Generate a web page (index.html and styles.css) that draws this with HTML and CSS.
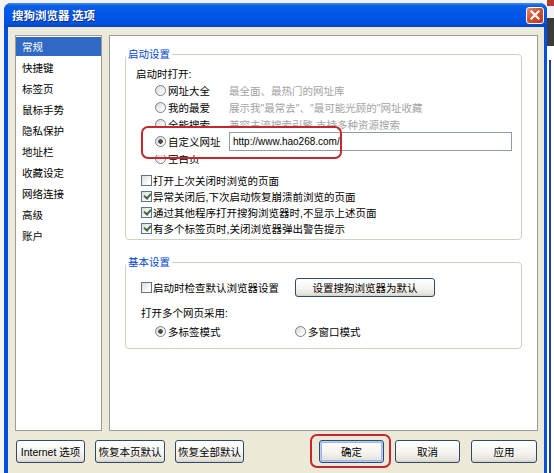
FILE: index.html
```html
<!DOCTYPE html>
<html lang="zh-CN">
<head>
<meta charset="UTF-8">
<meta name="viewport" content="width=device-width, initial-scale=1.0">
<title>搜狗浏览器 选项</title>
<link rel="stylesheet" href="styles.css">
</head>
<body>

<div class="screen">
    <div class="desk-left"></div>

    <div class="window">
        <div class="titlebar">
            <span class="title">搜狗浏览器 选项</span>
            <button class="close" aria-label="关闭">
                <svg width="10" height="10" viewBox="0 0 10 10">
                    <path d="M1.5 1.5 L8.5 8.5 M8.5 1.5 L1.5 8.5" stroke="#fff" stroke-width="2.2" stroke-linecap="square"/>
                </svg>
            </button>
        </div>

        <div class="client">
            <div class="panes">
                <ul class="nav">
                    <li class="active">常规</li>
                    <li>快捷键</li>
                    <li>标签页</li>
                    <li>鼠标手势</li>
                    <li>隐私保护</li>
                    <li>地址栏</li>
                    <li>收藏设定</li>
                    <li>网络连接</li>
                    <li>高级</li>
                    <li>账户</li>
                </ul>

                <div class="page">
                    <fieldset class="group group-start">
                        <legend>启动设置</legend>
                        <div class="caption">启动时打开:</div>
                        <div class="radio-row">
                            <span class="radio"></span><span class="radio-label">网址大全</span>
                            <span class="hint">最全面、最热门的网址库</span>
                        </div>
                        <div class="radio-row">
                            <span class="radio"></span><span class="radio-label">我的最爱</span>
                            <span class="hint">展示我"最常去"、"最可能光顾的"网址收藏</span>
                        </div>
                        <div class="radio-row">
                            <span class="radio"></span><span class="radio-label">全能搜索</span>
                            <span class="hint">兼容主流搜索引擎,支持多种资源搜索</span>
                        </div>
                        <div class="radio-row marked">
                            <span class="radio on"></span><span class="radio-label">自定义网址</span>
                            <span class="url">http://www.hao268.com/</span>
                        </div>
                        <div class="radio-row">
                            <span class="radio"></span><span class="radio-label">空白页</span>
                        </div>

                        <div class="checks">
                            <div class="check-row"><span class="check"></span>打开上次关闭时浏览的页面</div>
                            <div class="check-row"><span class="check on"></span>异常关闭后,下次启动恢复崩溃前浏览的页面</div>
                            <div class="check-row"><span class="check on"></span>通过其他程序打开搜狗浏览器时,不显示上述页面</div>
                            <div class="check-row"><span class="check on"></span>有多个标签页时,关闭浏览器弹出警告提示</div>
                        </div>
                    </fieldset>

                    <fieldset class="group group-basic">
                        <legend>基本设置</legend>
                        <div class="basic-row">
                            <div class="check-row"><span class="check"></span>启动时检查默认浏览器设置</div>
                            <button class="btn btn-wide">设置搜狗浏览器为默认</button>
                        </div>
                        <div class="caption">打开多个网页采用:</div>
                        <div class="mode-row">
                            <div class="mode"><span class="radio on"></span><span class="mode-label">多标签模式</span></div>
                            <div class="mode"><span class="radio"></span><span class="mode-label">多窗口模式</span></div>
                        </div>
                    </fieldset>
                </div>
            </div>

            <div class="actions">
                <button class="btn w69">Internet 选项</button>
                <button class="btn w70">恢复本页默认</button>
                <button class="btn w69">恢复全部默认</button>
                <div class="actions-right">
                    <button class="btn btn-default w65">确定</button>
                    <button class="btn w65">取消</button>
                    <button class="btn w66">应用</button>
                </div>
            </div>
        </div>
    </div>

    <div class="desk-right"></div>
</div>

</body>
</html>
```

FILE: styles.css
```css
* {
    box-sizing: border-box;
}
body {
    margin: 0;
    font-family: "Liberation Sans", "Noto Sans CJK SC", sans-serif;
    font-size: 10.5px;
    color: #000;
    background: #f3f3f1;
}
.screen {
    display: flex;
    width: 554px;
    height: 473px;
    overflow: hidden;
    background: #f3f3f1;
}
.desk-left {
    width: 4px;
    background: #f4f4f2;
}
.desk-right {
    width: 7px;
    background:
        linear-gradient(90deg, transparent 2px, #1f3fa6 2px, #1f3fa6 4px, transparent 4px) 0 60px / 100% 100% no-repeat,
        linear-gradient(#b33b2f 0, #b33b2f 6px, #f2f2f2 6px, #f2f2f2 18px, #3b3b3b 18px, #3b3b3b 46px, #fff 46px);
}

/* window frame */
.window {
    width: 543px;
    margin-top: 3px;
    display: flex;
    flex-direction: column;
    background: #0050dc;
    border-radius: 7px 7px 0 0;
}
.titlebar {
    height: 24px;
    display: flex;
    align-items: center;
    padding: 0 3px 0 8px;
    border-radius: 7px 7px 0 0;
    background: linear-gradient(#3d8bf5 0, #0a5ee6 3px, #0058e8 45%, #0052dd 85%, #0044c4 100%);
}
.title {
    color: #fff;
    font-family: "Noto Sans CJK SC", sans-serif;
    font-weight: bold;
    font-size: 11.5px;
    text-shadow: 1px 1px 0 #0a2a8a;
}
.close {
    margin-left: auto;
    width: 18px;
    height: 17px;
    padding: 0;
    display: flex;
    align-items: center;
    justify-content: center;
    border: 1px solid #fff;
    border-radius: 3px;
    background: linear-gradient(135deg, #e9876c, #d4532f 45%, #bf3a1a);
}

/* client area */
.client {
    flex: 1;
    margin: 0 3px 0 4px;
    padding: 8px 6px 0 7px;
    background: #ece9d8;
}
.panes {
    display: flex;
    gap: 7px;
    height: 396px;
}
.nav {
    width: 87px;
    margin: 0;
    padding: 1px 0 0;
    list-style: none;
    background: #fff;
    border: 1px solid #9c9c9c;
    font-family: "Noto Sans CJK SC", sans-serif;
}
.nav li {
    height: 19px;
    line-height: 19px;
    margin-bottom: 2px;
    padding-left: 6px;
}
.nav li.active {
    background: #316ac5;
    color: #fff;
}
.page {
    width: 429px;
    background: #fff;
    border: 1px solid #9c9c9c;
}

/* group boxes */
.group {
    margin: 11px 15px 0;
    padding: 5px 0 3px 10px;
    min-width: 0;
    border: 1px solid #d0d0bf;
    border-radius: 4px;
}
.group legend {
    padding: 0 2px;
    margin-left: -10px;
    line-height: 14px;
    color: #0046d5;
}
.group-basic {
    margin-top: 15px;
    padding: 9px 0 8px 15px;
}
.group-basic legend {
    margin-left: -15px;
}
.caption {
    height: 16px;
    line-height: 16px;
}
.group-basic .caption {
    margin-top: 8px;
}

.radio-row {
    display: flex;
    align-items: center;
    height: 17px;
    padding-left: 19px;
}
.radio {
    flex: none;
    width: 11px;
    height: 11px;
    border: 1px solid #6f819a;
    border-radius: 50%;
    background: linear-gradient(135deg, #d8d6ce, #fff 80%);
}
.radio.on {
    background:
        radial-gradient(circle, #4a4a4a 0, #4a4a4a 2px, transparent 2.6px),
        linear-gradient(135deg, #d8d6ce, #fff 80%);
}
.radio-label {
    width: 61px;
    margin-left: 2px;
    white-space: nowrap;
}
.hint {
    color: #a3a3a3;
    white-space: nowrap;
}
.url {
    width: 283px;
    height: 19px;
    line-height: 17px;
    padding-left: 3px;
    border: 1px solid #8a9db5;
    font-size: 10px;
    background: #fff;
}

/* red annotation marks */
.marked {
    position: relative;
    z-index: 1;
}
.marked::before,
.marked::after {
    content: "";
    position: absolute;
    left: 5px;
    top: -7px;
    width: 197px;
    height: 29px;
    border-radius: 7px;
}
.marked::before {
    background: #fff;
    z-index: -1;
}
.marked::after {
    border: 2px solid #c4272d;
    pointer-events: none;
}

.checks {
    margin-top: 5px;
}
.check-row {
    display: flex;
    align-items: center;
    height: 16px;
    padding-left: 5px;
    white-space: nowrap;
}
.check {
    flex: none;
    position: relative;
    width: 11px;
    height: 11px;
    margin-right: 1px;
    border: 1px solid #5b7494;
    background: linear-gradient(135deg, #dcdad3, #fff 80%);
}
.check.on::after {
    content: "";
    position: absolute;
    left: 2px;
    top: 1px;
    width: 5px;
    height: 3px;
    border-left: 2px solid #3f6b3f;
    border-bottom: 2px solid #3f6b3f;
    transform: rotate(-50deg);
}

.basic-row {
    display: flex;
    align-items: center;
    height: 19px;
}
.basic-row .check-row {
    width: 154px;
    padding-left: 0;
}
.mode-row {
    display: flex;
    align-items: center;
    height: 17px;
    margin-top: 2px;
    padding-left: 14px;
}
.mode {
    display: flex;
    align-items: center;
    width: 140px;
}
.mode-label {
    margin-left: 2px;
}

/* buttons */
.btn {
    height: 23px;
    padding: 0;
    font: inherit;
    color: #000;
    border: 1px solid #2c4a6e;
    border-radius: 3px;
    background: linear-gradient(#fff, #f5f4f0 55%, #e6e3da 88%, #d6d0c5);
    white-space: nowrap;
}
.btn-wide {
    width: 140px;
    height: 19px;
}
.actions {
    display: flex;
    gap: 10px;
    margin-top: 9px;
    padding-left: 1px;
}
.actions-right {
    display: flex;
    gap: 11px;
    margin-left: auto;
    margin-right: 1px;
}
.w65 { width: 65px; }
.w66 { width: 66px; }
.w69 { width: 69px; }
.w70 { width: 70px; }
.btn-default {
    position: relative;
    box-shadow: inset 0 0 0 1px #b9cdf3, inset 0 0 0 2px #9ab6ec;
}
.btn-default::after {
    content: "";
    position: absolute;
    left: -10px;
    top: -7px;
    right: -8px;
    bottom: -6px;
    border: 2px solid #c4272d;
    border-radius: 7px;
    pointer-events: none;
}
```
